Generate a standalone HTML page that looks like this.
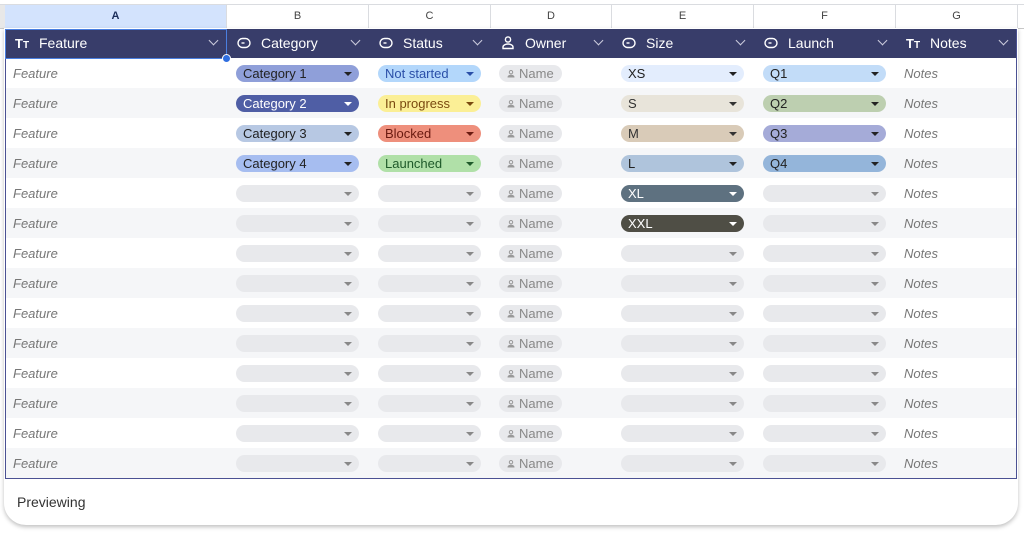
<!DOCTYPE html>
<html><head><meta charset="utf-8">
<style>
*{box-sizing:border-box;margin:0;padding:0}
body{width:1024px;height:533px;background:#f1f1f1;font-family:"Liberation Sans",Arial,sans-serif;position:relative;overflow:hidden}
.sheet{position:absolute;left:0;top:0;width:1024px;height:533px;background:#fff}
.colhdr{position:absolute;top:5px;height:24px;border-right:1px solid #dadce0;border-bottom:1px solid #c8c8c8;background:#fff;font-size:11px;color:#444;text-align:center;line-height:23px}
.card{position:absolute;left:4px;top:28px;width:1014px;height:497px;background:#fff;border-radius:0 0 22px 22px;box-shadow:0 2px 4px rgba(0,0,0,.25)}
.thead{position:absolute;left:5px;top:29px;width:1012px;height:29px;background:#383d6a}
.th{position:absolute;top:0;height:29px;color:#fff;font-size:14px;line-height:29px}
.th .lab{position:absolute;left:34px}
.th .ic{position:absolute;left:10px;top:0}
.th .chev{position:absolute;right:10px;width:7px;height:7px;border-right:1.5px solid #ccd;border-bottom:1.5px solid #ccd;transform:rotate(45deg);top:8px}
.row{position:absolute;left:5px;width:1012px;height:30px}
.row.alt{background:#f5f6f8}
.ft{position:absolute;left:8px;top:1px;font-style:italic;color:#777;font-size:13px;line-height:30px}
.pill{position:absolute;height:17px;border-radius:8.5px;font-size:13px;line-height:17px;padding-left:7px;color:#333}
.pill .ar{position:absolute;right:7px;top:6.5px;width:0;height:0;border-left:4px solid transparent;border-right:4px solid transparent;border-top:4px solid #333}
.frame{position:absolute;left:5px;top:29px;width:1012px;height:450px;border:1.5px solid #4b5193;border-top:none}
.selA{position:absolute;left:5px;top:29px;width:222px;height:30px;border:1.5px solid #4a7fe0}
.dot{position:absolute;left:222px;top:54px;width:9px;height:9px;border-radius:50%;background:#2f6ee0;border:1px solid #fff}
</style></head><body>
<div class="sheet">
  <div style="position:absolute;left:0;top:5px;width:5px;height:24px;background:#e8e8e8;border-bottom:1px solid #c8c8c8"></div>
  <div class="colhdr" style="left:5px;width:222px;background:#d3e3fd;color:#1a2d5a;font-weight:bold">A</div>
  <div class="colhdr" style="left:227px;width:142px">B</div>
  <div class="colhdr" style="left:369px;width:122px">C</div>
  <div class="colhdr" style="left:491px;width:121px">D</div>
  <div class="colhdr" style="left:612px;width:142px">E</div>
  <div class="colhdr" style="left:754px;width:142px">F</div>
  <div class="colhdr" style="left:896px;width:122px">G</div>
  <div class="colhdr" style="left:1018px;width:6px;border-right:none"></div>
  <div style="position:absolute;left:0;top:0;width:1024px;height:5px;background:#fff;border-bottom:1px solid #dadce0"></div>
</div>
<div class="card"></div>
<div class="thead">
  <div class="th" style="left:0;width:222px"><span class="ic" style="font-weight:bold;font-size:13px">T<span style="font-size:10px">T</span></span><span class="lab">Feature</span><span class="chev"></span></div>
  <div class="th" style="left:222px;width:142px"><span class="ic"><svg width="14" height="29"><rect x="1" y="9.5" width="12" height="9" rx="4.5" fill="none" stroke="#fff" stroke-width="1.4"/><line x1="4.5" y1="14" x2="7.5" y2="14" stroke="#fff" stroke-width="1.4"/></svg></span><span class="lab">Category</span><span class="chev"></span></div>
  <div class="th" style="left:364px;width:122px"><span class="ic"><svg width="14" height="29"><rect x="1" y="9.5" width="12" height="9" rx="4.5" fill="none" stroke="#fff" stroke-width="1.4"/><line x1="4.5" y1="14" x2="7.5" y2="14" stroke="#fff" stroke-width="1.4"/></svg></span><span class="lab">Status</span><span class="chev"></span></div>
  <div class="th" style="left:486px;width:121px"><span class="ic"><svg width="14" height="29"><circle cx="7" cy="10.5" r="2.6" fill="none" stroke="#fff" stroke-width="1.4"/><path d="M2 19.5v-1.5c0-2 3-3 5-3s5 1 5 3v1.5z" fill="none" stroke="#fff" stroke-width="1.4"/></svg></span><span class="lab">Owner</span><span class="chev"></span></div>
  <div class="th" style="left:607px;width:142px"><span class="ic"><svg width="14" height="29"><rect x="1" y="9.5" width="12" height="9" rx="4.5" fill="none" stroke="#fff" stroke-width="1.4"/><line x1="4.5" y1="14" x2="7.5" y2="14" stroke="#fff" stroke-width="1.4"/></svg></span><span class="lab">Size</span><span class="chev"></span></div>
  <div class="th" style="left:749px;width:142px"><span class="ic"><svg width="14" height="29"><rect x="1" y="9.5" width="12" height="9" rx="4.5" fill="none" stroke="#fff" stroke-width="1.4"/><line x1="4.5" y1="14" x2="7.5" y2="14" stroke="#fff" stroke-width="1.4"/></svg></span><span class="lab">Launch</span><span class="chev"></span></div>
  <div class="th" style="left:891px;width:121px"><span class="ic" style="font-weight:bold;font-size:13px">T<span style="font-size:10px">T</span></span><span class="lab">Notes</span><span class="chev"></span></div>
</div>
<div id="rows"></div>
<div class="frame"></div>
<div class="selA"></div>
<div class="dot"></div>
<div style="position:absolute;left:17px;top:494px;font-size:14px;color:#333">Previewing</div>
<script>
var cat=[["Category 1","#8f9fd9","#222"],["Category 2","#4f5ea5","#fff"],["Category 3","#b7c8e3","#222"],["Category 4","#a6bdf0","#222"]];
var st=[["Not started","#b3d7fb","#2a4fa8"],["In progress","#fbef96","#7a4a10"],["Blocked","#ee8f7c","#6a1a10"],["Launched","#b0e0a8","#1f5a2a"]];
var sz=[["XS","#e3edfd","#222"],["S","#e8e4da","#333"],["M","#d9cbb8","#333"],["L","#afc4dc","#222"],["XL","#5e7180","#fff"],["XXL","#4f4e45","#fff"]];
var la=[["Q1","#c2dcf8","#222"],["Q2","#bdcfb0","#222"],["Q3","#a5abd8","#222"],["Q4","#94b5da","#222"]];
function pill(x,w,d){var bg=d?d[1]:"#e8e9ec",c=d?d[2]:"#333",t=d?d[0]:"",ac=d?c:"#888";
return '<div class="pill" style="left:'+x+'px;top:7px;width:'+w+'px;background:'+bg+';color:'+c+'">'+t+'<span class="ar" style="border-top-color:'+ac+'"></span></div>';}
var h="";
for(var i=0;i<14;i++){
 var y=58+i*30;
 h+='<div class="row'+(i%2?' alt':'')+'" style="top:'+y+'px">';
 h+='<span class="ft">Feature</span>';
 h+=pill(231,123,cat[i]);
 h+=pill(373,103,st[i]);
 h+='<div class="pill" style="left:494px;top:7px;width:63px;background:#e8e9ec;color:#888;padding-left:20px"><svg style="position:absolute;left:8px;top:4.5px" width="8" height="8"><circle cx="4" cy="2.2" r="1.7" fill="none" stroke="#999" stroke-width="1"/><path d="M0.5 7.5c0-2 1.5-2.7 3.5-2.7s3.5.7 3.5 2.7z" fill="#999"/></svg>Name</div>';
 h+=pill(616,123,sz[i]);
 h+=pill(758,123,la[i]);
 h+='<span class="ft" style="left:899px">Notes</span>';
 h+='</div>';
}
document.getElementById("rows").innerHTML=h;
</script>
</body></html>
